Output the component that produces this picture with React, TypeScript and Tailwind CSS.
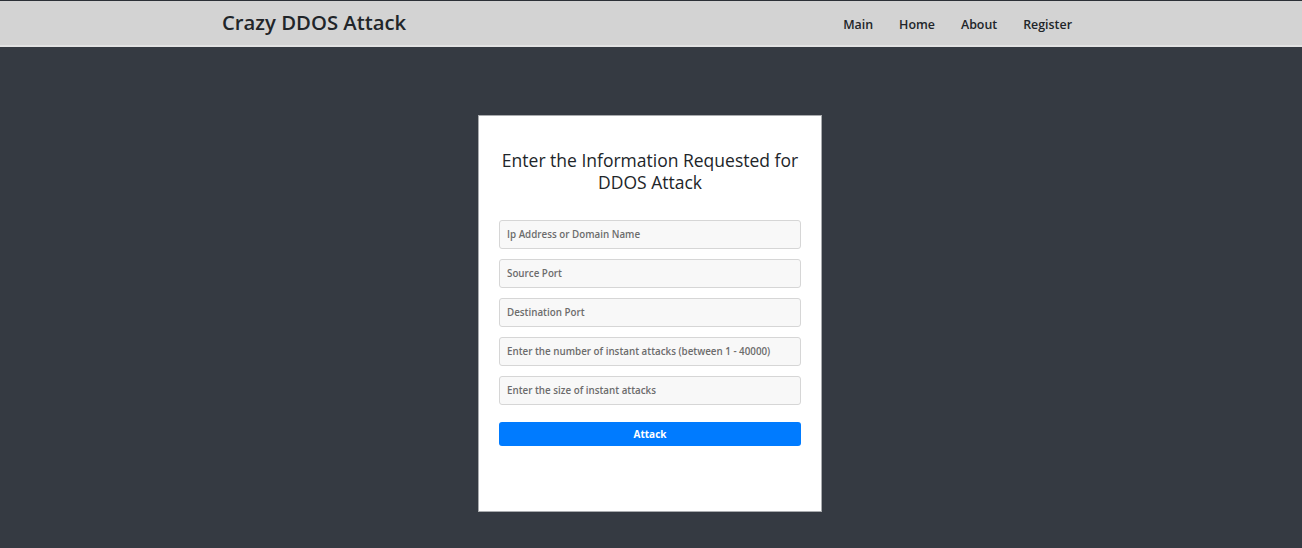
const fields = [
  'Ip Address or Domain Name',
  'Source Port',
  'Destination Port',
  'Enter the number of instant attacks (between 1 - 40000)',
  'Enter the size of instant attacks',
];

const links = ['Main', 'Home', 'About', 'Register'];

export default function App() {
  return (
    <div className="min-h-[548px] bg-[#353a42] font-['Open_Sans',sans-serif] border-t border-[#2b2f36]">
      <nav className="h-[46px] bg-[#d3d3d3] border-b-2 border-[#e2e2e2] flex items-center">
        <div className="w-[858px] mx-auto flex items-center justify-between">
          <span className="text-[20.3px] font-semibold text-[#212529] -mt-[2px]">Crazy DDOS Attack</span>
          <ul className="flex gap-[26px] text-[12.4px] font-semibold text-[#212529] mr-[8px] mt-[5px]">
            {links.map((l) => (
              <li key={l}>{l}</li>
            ))}
          </ul>
        </div>
      </nav>

      <div className="flex justify-center pt-[68px] pr-[2px]">
        <div className="w-[344px] h-[397px] bg-white border border-[#a9abae] px-[20px] pt-[33px]">
          <h2 className="text-center text-[17.5px] leading-[22px] font-medium text-[#212529] -mx-[2px]">
            Enter the Information Requested for DDOS Attack
          </h2>
          <form className="mt-[27px] flex flex-col gap-[10px]">
            {fields.map((f) => (
              <input
                key={f}
                placeholder={f}
                className="h-[29px] w-full rounded-[3px] border border-[#d6d6d6] bg-[#f8f8f8] px-[7px] text-[9.8px] font-semibold placeholder:text-[#6c6c6c] outline-none"
              />
            ))}
            <button
              type="button"
              className="mt-[7px] h-[24px] w-full rounded-[3px] bg-[#007bff] text-white text-[10px] font-bold"
            >
              Attack
            </button>
          </form>
        </div>
      </div>
    </div>
  );
}
